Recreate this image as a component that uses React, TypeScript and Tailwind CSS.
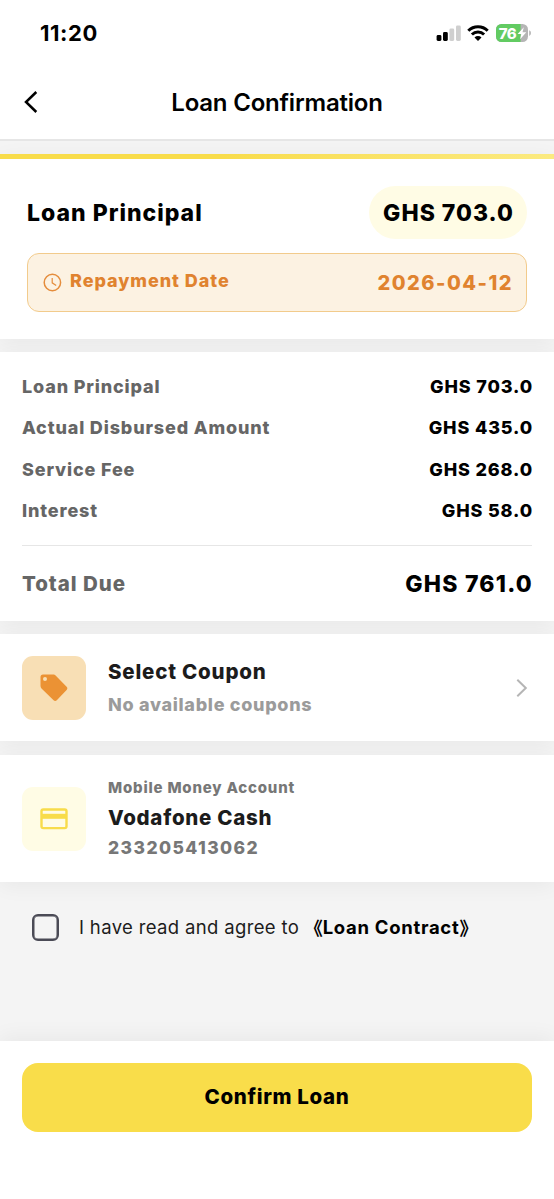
import React from "react";

const rows = [
  { label: "Loan Principal", value: "GHS 703.0" },
  { label: "Actual Disbursed Amount", value: "GHS 435.0" },
  { label: "Service Fee", value: "GHS 268.0" },
  { label: "Interest", value: "GHS 58.0" },
];

function StatusBar() {
  return (
    <div className="flex h-[66px] items-center justify-between pl-10 pr-[23px]">
      <span className="text-[22px] font-bold leading-6 tracking-[0.55px]">11:20</span>
      <div className="flex items-center">
        <svg width="25" height="16" viewBox="0 0 25 16">
          <rect x="0.6" y="10" width="4.8" height="6" rx="1.4" fill="#000" />
          <rect x="7" y="7" width="4.8" height="9" rx="1.4" fill="#000" />
          <rect x="13.4" y="3.6" width="4.8" height="12.4" rx="1.4" fill="#cfcfcf" />
          <rect x="20" y="0.5" width="4.8" height="15.5" rx="1.4" fill="#cfcfcf" />
        </svg>
        <svg className="ml-[6px]" width="22" height="16" viewBox="0 0 22 16">
          <g fill="none" stroke="#000" strokeWidth="3">
            <path d="M1.3 5.8a13.8 13.8 0 0 1 19.4 0" />
            <path d="M4.9 9.5a8.7 8.7 0 0 1 12.2 0" />
          </g>
          <path d="M11 16l-3.5-3.6a5 5 0 0 1 7 0z" fill="#000" />
        </svg>
        <svg className="ml-[7px]" width="35" height="18" viewBox="0 0 35 18">
          <defs>
            <clipPath id="battery">
              <rect width="32" height="18" rx="5.5" />
            </clipPath>
          </defs>
          <g clipPath="url(#battery)">
            <rect width="32" height="18" fill="#b5b5b5" />
            <rect width="24.6" height="18" fill="#62cb62" />
          </g>
          <path d="M33.2 6.3q1.8.8 1.8 2.8t-1.8 2.8z" fill="#b5b5b5" />
          <text x="2.8" y="14.6" fontSize="15" fontWeight="800" fill="#fff" textLength="18">76</text>
          <path d="M27.8 3.2L21.6 10h3.7l-1.2 5.2 6.2-7h-3.8z" fill="#fff" />
        </svg>
      </div>
    </div>
  );
}

function Header() {
  return (
    <div className="relative flex h-[73px] items-center justify-center">
      <svg className="absolute left-[24px] top-[25px]" width="14" height="22" viewBox="0 0 14 22" fill="none" stroke="#000" strokeWidth="2.5">
        <path d="M12.3 1L2 11l10.3 10" />
      </svg>
      <h1 className="text-[24px] font-semibold leading-8 tracking-[-0.2px]">Loan Confirmation</h1>
    </div>
  );
}

const shadow = "shadow-[0_4px_20px_rgba(0,0,0,0.05)]";

export default function App() {
  return (
    <div className="flex h-[1199px] w-[554px] flex-col overflow-hidden bg-[#f4f4f4] font-['Inter','Noto_Sans_CJK_SC',sans-serif] text-black">
      <header className="h-[141px] shrink-0 border-b-2 border-[#e6e6e6] bg-white">
        <StatusBar />
        <Header />
      </header>

      <section className={`mt-[13px] h-[185px] shrink-0 bg-white ${shadow}`}>
        <div className="h-[5px] bg-linear-to-r from-[#f8dc4a] from-40% to-[#fbea80]" />
        <div className="px-[27px] pt-[27px]">
          <div className="flex h-[53px] items-center justify-between">
            <h2 className="text-[23px] font-extrabold leading-7 tracking-[1px]">Loan Principal</h2>
            <span className="flex h-[53px] w-[158px] items-center justify-center rounded-full bg-[#fffce5] pl-px pt-px text-[23px] font-extrabold tracking-[1px]">GHS 703.0</span>
          </div>
          <div className="mt-[14px] flex h-[59px] items-center justify-between rounded-xl border border-[#f2cb8c] bg-[#fcf2e2] pl-[15px] pr-[13px] text-[#e0832f]">
            <div className="flex items-center">
              <svg width="20" height="20" viewBox="0 0 20 20" fill="none" stroke="#e58d3c" strokeWidth="1.5">
                <circle cx="9.4" cy="9.5" r="8.2" />
                <path d="M9.2 5v4.8l4 2.6" strokeWidth="1.2" />
              </svg>
              <span className="-mt-[5px] ml-[7px] text-[18px] font-extrabold tracking-[0.95px]">Repayment Date</span>
            </div>
            <span className="text-[20px] font-extrabold tracking-[1.5px]">2026-04-12</span>
          </div>
        </div>
      </section>

      <section className={`mt-[13px] h-[269px] shrink-0 bg-white px-[22px] pt-[13px] ${shadow}`}>
        {rows.map((row) => (
          <div key={row.label} className="flex h-[41.5px] items-center justify-between pt-px text-[18px]">
            <span className="font-extrabold tracking-[0.85px] text-[#666]">{row.label}</span>
            <span className="-mr-px font-extrabold tracking-[0.85px]">{row.value}</span>
          </div>
        ))}
        <div className="mt-[14px] flex h-[76px] items-center justify-between border-t border-[#e6e6e6] pt-px">
          <span className="text-[20.5px] font-extrabold tracking-[0.95px] text-[#666]">Total Due</span>
          <span className="-mr-px pt-px text-[23px] font-extrabold tracking-[1.25px]">GHS 761.0</span>
        </div>
      </section>

      <section className={`mt-[13px] flex h-[107px] shrink-0 items-center bg-white px-[22px] ${shadow}`}>
        <div className="flex size-16 items-center justify-center rounded-[11px] bg-[#f8dfb5]">
          <svg className="-ml-px" width="28" height="28" viewBox="0 0 28 28">
            <path fillRule="evenodd" fill="#eb9234" d="M3 .5h10.6q1.1 0 2 .9l11 11.3q1.5 1.6 0 3.2l-9.8 10.3q-1.6 1.4-3.2 0L1.5 14.4Q.5 13.4.5 12V3Q.5.5 3 .5zM5 2.9a2 2 0 1 0 0 4 2 2 0 0 0 0-4z" />
          </svg>
        </div>
        <div className="ml-[22px] flex-1">
          <div className="text-[20.5px] font-extrabold leading-[30px] tracking-[0.8px] text-[#1c1c1c]">Select Coupon</div>
          <div className="mt-[4px] text-[18px] font-extrabold leading-[28px] tracking-[0.7px] text-[#9b9b9b]">No available coupons</div>
        </div>
        <svg width="20" height="20" viewBox="0 0 20 20" fill="none" stroke="#b5b5b5" strokeWidth="2">
          <path d="M5.3 1.8l8.5 8.2-8.5 8.2" />
        </svg>
      </section>

      <section className={`mt-[14px] flex h-[127px] shrink-0 items-center bg-white px-[22px] ${shadow}`}>
        <div className="flex size-16 items-center justify-center rounded-[11px] bg-[#fffce5]">
          <svg className="-ml-px" width="28" height="22" viewBox="0 0 28 22">
            <rect x="1.5" y="1.5" width="25" height="18.6" rx="1.8" fill="none" stroke="#f8dc4a" strokeWidth="2.4" />
            <rect x="2" y="5.8" width="24" height="5" fill="#f8dc4a" />
          </svg>
        </div>
        <div className="-mt-[2px] ml-[22px]">
          <div className="text-[15px] font-extrabold leading-[30px] tracking-[0.8px] text-[#777]">Mobile Money Account</div>
          <div className="text-[20.5px] font-extrabold leading-[30px] tracking-[0.72px] text-[#1c1c1c]">Vodafone Cash</div>
          <div className="text-[17.5px] font-extrabold leading-[30px] tracking-[1.42px] text-[#777]">233205413062</div>
        </div>
      </section>

      <div className="flex h-[90px] shrink-0 items-center pl-8 text-[18px]">
        <span className="size-[27px] rounded-md border-[2.5px] border-[#4a4a55] shadow-[inset_0_0_0_0.5px_#4a4a55]" />
        <span className="ml-5 pt-px text-[18.5px] tracking-[0.35px] text-[#1c1c1c]">I have read and agree to</span>
        <span className="ml-[14px] flex items-center pt-px text-[18.5px] font-bold tracking-[0.7px]">
          <span className="-ml-[9px] font-['Noto_Sans_CJK_SC',sans-serif] tracking-normal">《</span>
          Loan Contract
          <span className="font-['Noto_Sans_CJK_SC',sans-serif] tracking-normal">》</span>
        </span>
      </div>

      <footer className="mt-auto h-[158px] bg-white px-[22px] pt-[22px] shadow-[0_-4px_20px_rgba(0,0,0,0.05)]">
        <button className="h-[69px] w-full rounded-2xl bg-[#f9dd4a] text-[20.5px] font-extrabold tracking-[0.65px]">Confirm Loan</button>
      </footer>
    </div>
  );
}
